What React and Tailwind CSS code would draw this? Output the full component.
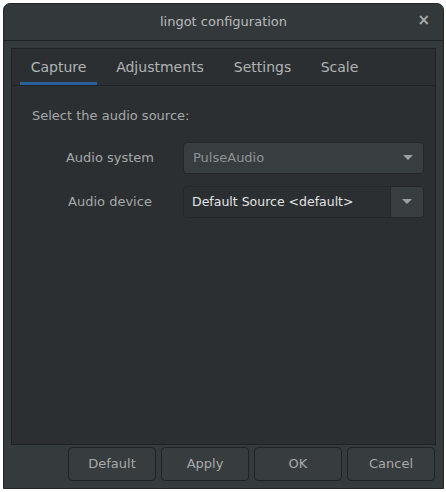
import React from "react";

function Arrow() {
  return (
    <svg width="10" height="6" viewBox="0 0 10 6" className="block">
      <path d="M0 0 L10 0 L5 5 Z" fill="#9da1a2" />
    </svg>
  );
}

export default function App() {
  const font = { fontFamily: '"DejaVu Sans", sans-serif' };
  const tabs = [
    ["Capture", "w-[77px]"],
    ["Adjustments", "w-[110px]"],
    ["Settings", "w-[79px]"],
    ["Scale", "w-[59px]"],
  ];
  return (
    <div className="w-[446px] h-[492px] bg-white pt-[3px] pl-[3px]" style={font}>
      <div className="w-[441px] h-[486px] flex flex-col rounded-t-[7px] border border-[#23272a] bg-[#353a3d] overflow-hidden">
        {/* header */}
        <div className="h-[37px] shrink-0 flex items-center justify-center relative border-b border-[#202325] bg-[#33383b]">
          <span className="text-[13px] text-[#b9bbbb]">lingot configuration</span>
          <span className="absolute right-[13px] top-[9px] text-[15px] font-bold text-[#a9abab] leading-none">×</span>
        </div>
        {/* body */}
        <div className="flex-1 flex flex-col px-[7px] pt-[7px] pb-[6px]">
          <div className="h-[397px] flex flex-col border border-[#1f2325] bg-[#2b2f32]">
            <div className="h-[37px] shrink-0 flex items-stretch pl-[8px] gap-[8px] border-b border-[#202426]">
              {tabs.map(([t, w], i) => (
                <div
                  key={t}
                  className={
                    w +
                    " flex items-center justify-center text-[14px] text-[#b1b4b4] " +
                    (i === 0 ? "border-b-[3px] border-[#2a6099] pt-[3px]" : "")
                  }
                >
                  {t}
                </div>
              ))}
            </div>
            <div className="flex flex-col pl-[20px] pr-[11px] pt-[22px]">
              <div className="text-[13px] text-[#a6a9a9] leading-[16px]">Select the audio source:</div>
              <div className="flex items-center mt-[18px] h-[32px]">
                <div className="ml-[12px] w-[132px] text-center text-[13px] text-[#a6a9a9]">Audio system</div>
                <div className="ml-[7px] flex-1 h-[32px] rounded-[4px] border border-[#23272a] bg-[#383d40] flex items-center justify-between pl-[9px] pr-[10px]">
                  <span className="text-[13px] text-[#8f9394]">PulseAudio</span>
                  <Arrow />
                </div>
              </div>
              <div className="flex items-center mt-[12px] h-[32px]">
                <div className="ml-[12px] w-[132px] text-center text-[13px] text-[#a6a9a9]">Audio device</div>
                <div className="ml-[7px] flex-1 h-[32px] rounded-[4px] border border-[#23272a] flex overflow-hidden">
                  <div className="flex-1 bg-[#2b2f32] flex items-center pl-[8px] text-[12.5px] text-[#e3e4e4]">
                    Default Source &lt;default&gt;
                  </div>
                  <div className="w-[33px] bg-[#383d40] border-l border-[#23272a] flex items-center justify-center">
                    <Arrow />
                  </div>
                </div>
              </div>
            </div>
          </div>
          <div className="mt-[2px] flex justify-end gap-[5px] pr-[1px]">
            {["Default", "Apply", "OK", "Cancel"].map((b) => (
              <div
                key={b}
                className="w-[88px] h-[34px] rounded-[4px] border border-[#1f2325] bg-[#373c3f] flex items-center justify-center text-[13px] text-[#a6a9a9]"
              >
                {b}
              </div>
            ))}
          </div>
        </div>
      </div>
    </div>
  );
}
